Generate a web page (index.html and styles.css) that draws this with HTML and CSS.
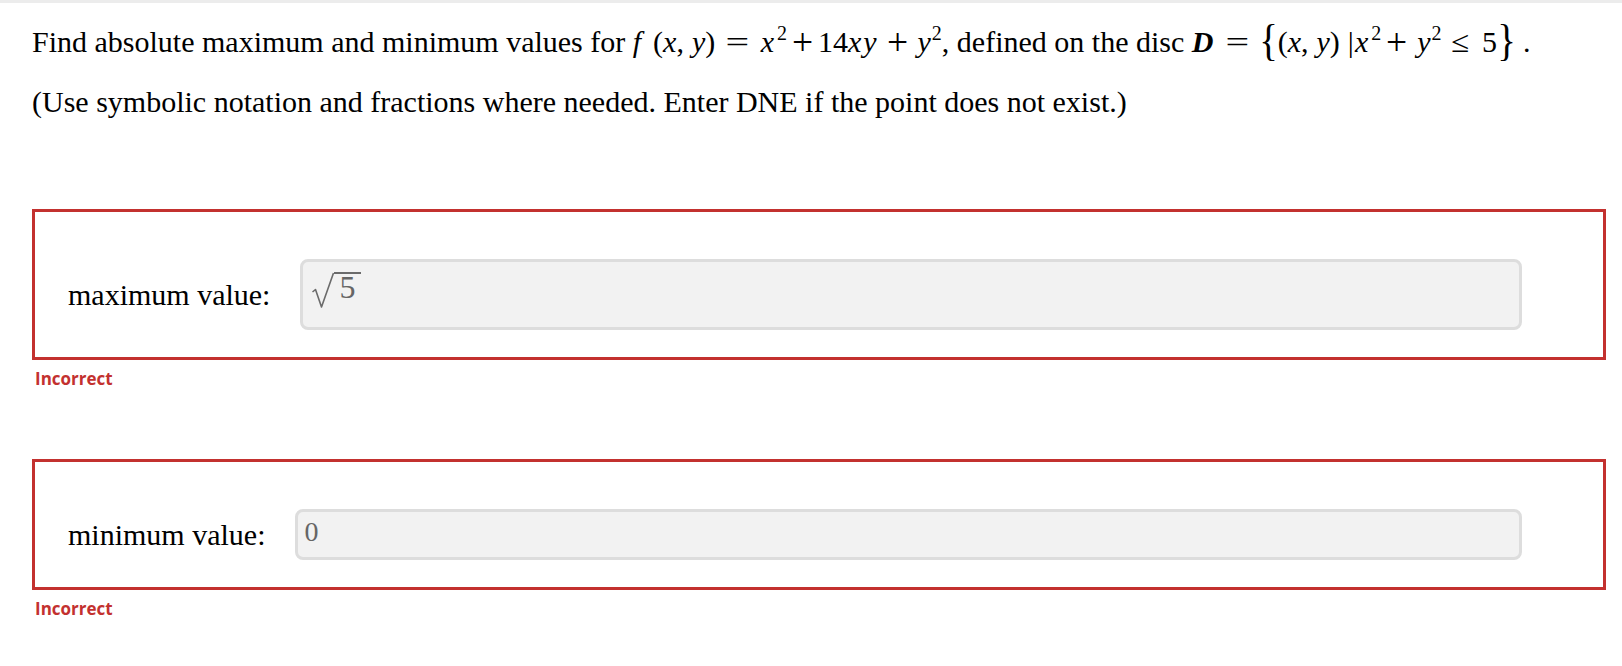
FILE: index.html
```html
<!DOCTYPE html>
<html lang="en">
<head>
<meta charset="utf-8">
<title>Absolute extrema on a disc</title>
<link rel="stylesheet" href="styles.css">
</head>
<body>
<div class="topbar"></div>
<main class="page">
  <p class="question">Find absolute maximum and minimum values for <span class="math"><i class="fn">f</i>(<i>x</i>,<span class="thin"></span><i>y</i>)<span class="rel">=</span><i>x</i><sup class="sup-x">2</sup><span class="bin bin-num">+</span>14<i class="ic">x</i><i class="ic">y</i><span class="bin">+</span><i>y</i><sup class="sup-y">2</sup></span>, defined on the disc <span class="math"><i class="bold-it">D</i><span class="rel">=</span><span class="brace brace-open">{</span>(<i>x</i>,<span class="thin"></span><i>y</i>)<span class="bar">|</span><i>x</i><sup class="sup-x">2</sup><span class="bin bin-after-sup">+</span><i>y</i><sup class="sup-y">2</sup><span class="rel rel-le">≤</span>5<span class="brace">}</span></span> .</p>
  <p class="note">(Use symbolic notation and fractions where needed. Enter DNE if the point does not exist.)</p>

  <section class="answer">
    <span class="answer-label">maximum value:</span>
    <div class="field field-tall">
      <span class="sqrt"><svg class="rad" width="22" height="36" viewBox="0 0 22 36"><path d="M0.5 20 L3.5 17.5 L9.5 35 L21.5 1" fill="none" stroke="#6b6b6b" stroke-width="1.6" stroke-linejoin="round"/></svg><span class="radicand">5</span></span>
    </div>
  </section>
  <div class="feedback">Incorrect</div>

  <section class="answer answer-second">
    <span class="answer-label">minimum value:</span>
    <div class="field">
      <span class="field-text">0</span>
    </div>
  </section>
  <div class="feedback">Incorrect</div>
</main>
</body>
</html>
```

FILE: styles.css
```css
html, body {
  margin: 0;
  padding: 0;
  background: #ffffff;
}

body {
  font-family: "Liberation Serif", "Times New Roman", serif;
  color: #000000;
}

.topbar {
  height: 3px;
  background: #ececec;
}

.page {
  padding: 0 16px 0 32px;
}

.question,
.note {
  margin: 0;
  font-size: 30px;
  line-height: 34px;
  white-space: nowrap;
}

.question {
  padding-top: 22px;
}

.note {
  margin-top: 26px;
}

.math i {
  font-style: italic;
}

.math .fn {
  margin-right: 12px;
}

.math .ic {
  margin-right: 2px;
}

.math .bold-it {
  font-weight: 700;
  font-style: italic;
  margin-right: 2px;
}

.math .thin {
  display: inline-block;
  width: 8px;
}

.math sup {
  font-size: 20px;
  vertical-align: 12px;
  line-height: 0;
}

.math .sup-x {
  margin-left: 3px;
}

.math .sup-y {
  margin-left: 1px;
}

.math .rel {
  display: inline-block;
  margin: 0 14.5px 0 14px;
  transform: scaleX(1.4);
}

.math .rel-le {
  margin: 0 13px 0 11px;
  transform: scaleX(1.1);
}

.math .bin {
  display: inline-block;
  margin: 0 12px 0 10px;
  transform: scale(1.25);
}

.math .bin-num {
  margin: 0 7px 0 7px;
}

.math .bin-after-sup {
  margin-left: 7px;
}

.math .brace {
  display: inline-block;
  font-size: 44px;
  line-height: 0;
  vertical-align: -3px;
  margin: 0 -1.3px;
  transform: scaleX(0.88);
}

.math .brace-open {
  margin-left: -3px;
}

.math .bar {
  margin: 0 1px 0 8px;
}

.answer {
  margin-top: 90px;
  border: 3px solid #c3312f;
  display: flex;
  align-items: center;
  gap: 30px;
  padding: 47px 81px 27px 33px;
}

.answer-second {
  margin-top: 69px;
}

.answer-label {
  font-size: 30px;
  line-height: 34px;
  white-space: nowrap;
}

.field {
  flex: 1;
  box-sizing: border-box;
  height: 51px;
  border: 3px solid #dddddd;
  border-radius: 8px;
  background: #f2f2f2;
  color: #666666;
  display: flex;
  align-items: flex-start;
  padding: 3px 6px 0 6px;
}

.field-tall {
  height: 71px;
  padding-top: 10px;
}

.field-text {
  font-size: 28px;
  line-height: 34px;
}

.sqrt {
  display: inline-flex;
  align-items: flex-start;
  margin-left: 3px;
}

.rad {
  display: block;
}

.radicand {
  border-top: 2px solid #6b6b6b;
  font-size: 32px;
  line-height: 26px;
  padding: 0 6px 0 5px;
  color: #666666;
}

.feedback {
  font-family: "Open Sans", "Liberation Sans", sans-serif;
  font-weight: 700;
  font-size: 17px;
  line-height: 23px;
  color: #c3312f;
  padding-left: 3px;
  margin-top: 7px;
}
```
